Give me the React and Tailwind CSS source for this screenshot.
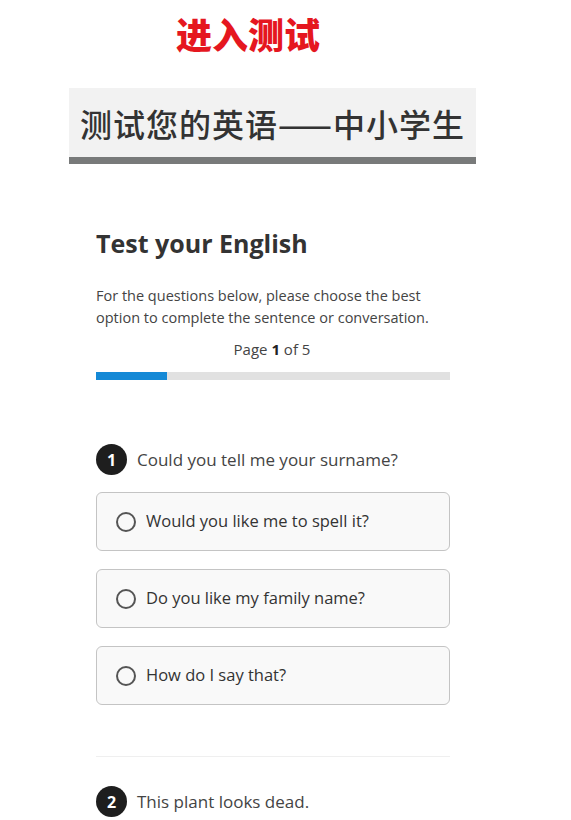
export default function App() {
  const options = [
    "Would you like me to spell it?",
    "Do you like my family name?",
    "How do I say that?",
  ];
  return (
    <div className="w-[571px] h-[820px] overflow-hidden bg-white" style={{ fontFamily: '"Open Sans", "Noto Sans CJK SC", sans-serif' }}>
      <div className="pt-[9px] pl-[176px] h-[88px]">
        <div className="text-[36px] leading-[48px] font-black text-[#e5171f]" style={{ fontFamily: '"Noto Sans CJK SC", sans-serif' }}>进入测试</div>
      </div>
      <div className="ml-[69px] w-[407px]">
        <div className="h-[69px] bg-[#f2f2f2] flex items-center pl-[11px]">
          <div className="text-[32px] leading-[40px] text-[#333] font-medium tracking-[1px]" style={{ fontFamily: '"Noto Sans CJK SC", sans-serif' }}>测试您的英语——中小学生</div>
        </div>
        <div className="h-[7px] bg-[#787a7a]"></div>
      </div>
      <div className="ml-[96px] w-[354px]">
        <h1 className="mt-[62px] text-[25px] leading-[34px] font-bold text-[#333]">Test your English</h1>
        <p className="mt-[25px] text-[14.5px] leading-[22px] text-[#444]">For the questions below, please choose the best option to complete the sentence or conversation.</p>
        <div className="mt-[9px] text-center text-[15px] leading-[22px] text-[#444] pr-[2px]">Page <b className="font-bold text-[#222]">1</b> of 5</div>
        <div className="mt-[12px] h-[8px] bg-[#e1e1e1]">
          <div className="h-full bg-[#1589d6]" style={{ width: "20%" }}></div>
        </div>
        <div className="mt-[64px] flex items-center gap-[10px]">
          <div className="w-[31px] h-[31px] rounded-full bg-[#1e1e1e] text-white flex items-center justify-center text-[16px] font-bold">1</div>
          <div className="text-[17px] text-[#444]">Could you tell me your surname?</div>
        </div>
        <div className="mt-[17px] flex flex-col gap-[18px]">
          {options.map((o) => (
            <div key={o} className="h-[59px] rounded-[6px] border border-[#c4c4c4] bg-[#f9f9f9] flex items-center pl-[19px] gap-[10px]">
              <div className="w-[20px] h-[20px] rounded-full border-2 border-[#555]"></div>
              <div className="text-[16.5px] text-[#333]">{o}</div>
            </div>
          ))}
        </div>
        <div className="mt-[51px] h-px bg-[#efefef]"></div>
        <div className="mt-[29px] flex items-center gap-[10px]">
          <div className="w-[31px] h-[31px] rounded-full bg-[#1e1e1e] text-white flex items-center justify-center text-[16px] font-bold">2</div>
          <div className="text-[17px] text-[#444]">This plant looks dead.</div>
        </div>
      </div>
    </div>
  );
}
